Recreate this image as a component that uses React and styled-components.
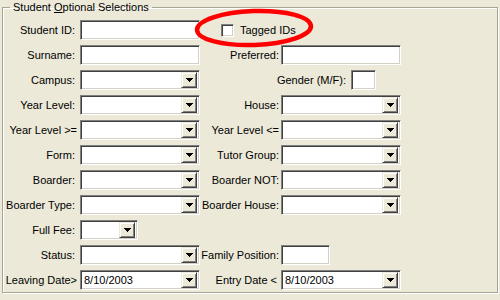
import React from "react"
import styled, { createGlobalStyle } from "styled-components"

const GlobalStyle = createGlobalStyle`
  html, body {
    margin: 0;
    padding: 0;
    background: #ece9d8;
  }
  body {
    font-family: "Liberation Sans", Arial, sans-serif;
    font-size: 11px;
    color: #000;
  }
`

const Page = styled.div`
  position: relative;
  width: 500px;
  height: 300px;
  overflow: hidden;
  padding-top: 1px;
  box-sizing: border-box;
`

const GroupBox = styled.fieldset`
  box-sizing: border-box;
  height: 292px;
  margin: 0 2px;
  padding: 6px 0 0 1px;
  border: 1px solid #a7a593;
  box-shadow: inset 1px 1px #fff, 1px 1px #fff;
  min-width: 0;
`

const Title = styled.legend`
  margin-left: 6px;
  padding: 0 3px;
  line-height: 13px;
`

const Form = styled.div`
  display: flex;
  flex-direction: column;
  gap: 5px;
`

const Row = styled.div`
  display: grid;
  grid-template-columns: 76px 120px 81px 120px;
  height: 20px;
  align-items: center;
`

const Label = styled.span`
  text-align: right;
  white-space: nowrap;
  padding-right: ${p => p.$pad ?? 5}px;
`

const TextBox = styled.div`
  box-sizing: border-box;
  width: ${p => p.$width ?? 120}px;
  height: 20px;
  background: #fff;
  border: 1px solid;
  border-color: #808080 #fff #fff #808080;
  box-shadow: inset 1px 1px #404040, inset -1px -1px #d4d0c8;
  display: flex;
  align-items: center;
  padding: 2px;
`

const Value = styled.span`
  flex: 1;
  padding-left: 1px;
  line-height: 16px;
`

const DropButton = styled.div`
  box-sizing: border-box;
  width: 16px;
  height: 16px;
  background: #ece9d8;
  border: 1px solid;
  border-color: #ece9d8 #404040 #404040 #ece9d8;
  box-shadow: inset 1px 1px #fff, inset -1px -1px #808080;
  display: flex;
  align-items: center;
  justify-content: center;
`

const CheckCell = styled.div`
  grid-column: 3 / 5;
  display: flex;
  align-items: center;
  gap: 6px;
  padding-left: 21px;
`

const CheckBox = styled.div`
  box-sizing: border-box;
  width: 13px;
  height: 13px;
  background: #fff;
  border: 1px solid;
  border-color: #808080 #fff #fff #808080;
  box-shadow: inset 1px 1px #404040, inset -1px -1px #d4d0c8;
`

const GenderCell = styled.div`
  grid-column: 3 / 5;
  display: flex;
  align-items: center;
`

const GenderLabel = styled(Label)`
  width: 151px;
  box-sizing: border-box;
`

const Highlight = styled.svg`
  position: absolute;
  left: 190px;
  top: 5px;
  pointer-events: none;
`

const Arrow = () => (
  <svg width="7" height="4" viewBox="0 0 7 4" shapeRendering="crispEdges">
    <path d="M0 0h7v1H0z M1 1h5v1H1z M2 2h3v1H2z M3 3h1v1H3z" fill="#000" />
  </svg>
)

const Combo = ({ width, value }) => (
  <TextBox $width={width}>
    <Value>{value}</Value>
    <DropButton>
      <Arrow />
    </DropButton>
  </TextBox>
)

const App = () => {
  return (
    <Page>
      <GlobalStyle />
      <GroupBox>
        <Title>
          Student <u>O</u>ptional Selections
        </Title>
        <Form>
          <Row>
            <Label>Student ID:</Label>
            <TextBox />
            <CheckCell>
              <CheckBox />
              <span>Tagged IDs</span>
            </CheckCell>
          </Row>
          <Row>
            <Label>Surname:</Label>
            <TextBox />
            <Label $pad={2}>Preferred:</Label>
            <TextBox />
          </Row>
          <Row>
            <Label>Campus:</Label>
            <Combo />
            <GenderCell>
              <GenderLabel>Gender (M/F):</GenderLabel>
              <TextBox $width={25} />
            </GenderCell>
          </Row>
          <Row>
            <Label>Year Level:</Label>
            <Combo />
            <Label $pad={2}>House:</Label>
            <Combo />
          </Row>
          <Row>
            <Label $pad={3}>Year Level &gt;=</Label>
            <Combo />
            <Label $pad={2}>Year Level &lt;=</Label>
            <Combo />
          </Row>
          <Row>
            <Label>Form:</Label>
            <Combo />
            <Label $pad={2}>Tutor Group:</Label>
            <Combo />
          </Row>
          <Row>
            <Label>Boarder:</Label>
            <Combo />
            <Label $pad={2}>Boarder NOT:</Label>
            <Combo />
          </Row>
          <Row>
            <Label>Boarder Type:</Label>
            <Combo />
            <Label $pad={2}>Boarder House:</Label>
            <Combo />
          </Row>
          <Row>
            <Label>Full Fee:</Label>
            <Combo width={58} />
          </Row>
          <Row>
            <Label>Status:</Label>
            <Combo />
            <Label $pad={2}>Family Position:</Label>
            <TextBox $width={49} />
          </Row>
          <Row>
            <Label $pad={3}>Leaving Date&gt;</Label>
            <Combo value="8/10/2003" />
            <Label $pad={4}>Entry Date &lt;</Label>
            <Combo value="8/10/2003" />
          </Row>
        </Form>
      </GroupBox>
      <Highlight width="130" height="50" viewBox="0 0 130 50">
        <ellipse
          cx="64"
          cy="23"
          rx="57"
          ry="17"
          fill="none"
          stroke="#ff0000"
          strokeWidth="4.5"
          transform="rotate(-2 64 23)"
        />
      </Highlight>
    </Page>
  )
}

export default App
